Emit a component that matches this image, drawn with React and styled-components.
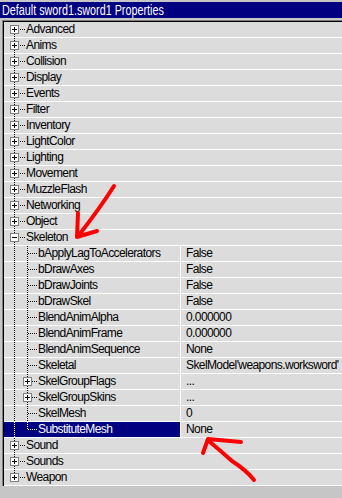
import React from 'react';
import styled, { createGlobalStyle } from 'styled-components';

const GlobalStyle = createGlobalStyle`
  html, body { margin: 0; padding: 0; background: #c6c6c6; }
  body { font-family: "Liberation Sans", Arial, sans-serif; }
`;

const Window = styled.div`
  position: relative;
  width: 342px;
  height: 498px;
  overflow: hidden;
  background: #c6c6c6;
  padding-top: 2px;
  box-sizing: border-box;
  display: flex;
  flex-direction: column;
`;

const TitleBar = styled.div`
  height: 16px;
  background: #000080;
  color: #fff;
  line-height: 16px;
  padding-left: 2px;
  white-space: nowrap;
  margin-bottom: 2px;
  overflow: hidden;
`;

const TitleText = styled.span`
  display: inline-block;
  font-family: "Liberation Sans", Arial, sans-serif;
  font-size: 14px;
  transform: scaleX(0.77);
  transform-origin: left center;
`;

const Sunken = styled.div`
  margin-left: 2px;
  border-top: 1px solid #808080;
  border-left: 1px solid #808080;
`;

const Inner = styled.div`
  border-top: 1px solid #000;
  border-left: 1px solid #000;
`;

const List = styled.div`
  display: flex;
  flex-direction: column;
`;

const Row = styled.div`
  display: flex;
  height: 15px;
  border-bottom: 1px solid #fff;
  background: #dcdcdc;
  font-size: 12px;
  letter-spacing: -0.6px;
  color: #000;
`;

const NameCell = styled.div`
  display: flex;
  align-items: center;
  flex: ${(p) => (p.$full ? '1 1 auto' : '0 0 176px')};
  background: ${(p) => (p.$selected ? '#000080' : 'transparent')};
  color: ${(p) => (p.$selected ? '#fff' : '#000')};
  overflow: hidden;
  white-space: nowrap;
`;

const ValueCell = styled.div`
  flex: 1;
  border-left: 1px solid #fff;
  padding-left: 5px;
  display: flex;
  align-items: center;
  white-space: nowrap;
  overflow: hidden;
`;

const Label = styled.span`
  line-height: 15px;
`;

const GutterSvg = styled.svg`
  flex: none;
  display: block;
`;

const Overlay = styled.svg`
  position: absolute;
  left: 0;
  top: 0;
  pointer-events: none;
`;

function vDots(x, y0, y1, color, key) {
  const out = [];
  for (let y = y0; y <= y1; y++) {
    if (y % 2 === 0) out.push(<rect key={`${key}v${y}`} x={x} y={y} width="1" height="1" fill={color} />);
  }
  return out;
}

function hDots(y, x0, x1, color, key) {
  const out = [];
  for (let x = x0; x <= x1; x++) {
    if (x % 2 === 0) out.push(<rect key={`${key}h${x}`} x={x} y={y} width="1" height="1" fill={color} />);
  }
  return out;
}

function Box({ cx, type }) {
  return (
    <g>
      <rect x={cx - 3.5} y={3.5} width="8" height="8" fill="#fff" stroke="#808080" />
      <rect x={cx - 2} y={7} width="5" height="1" fill="#000" />
      {type === 'plus' && <rect x={cx} y={5} width="1" height="5" fill="#000" />}
    </g>
  );
}

function Gutter({ level, expander, first, last, childLast, selected }) {
  const c = selected ? '#fff' : '#000';
  const w = level === 0 ? 22 : 34;
  const parts = [];
  if (level === 0) {
    parts.push(...vDots(10, first ? 12 : 0, last ? 2 : 14, c, 'r'));
    parts.push(...hDots(7, expander ? 15 : 10, 20, c, 'h'));
  } else {
    parts.push(...vDots(10, 0, 14, c, 'r'));
    parts.push(...vDots(23, 0, childLast ? 7 : 14, c, 'c'));
    parts.push(...hDots(7, expander ? 28 : 24, 32, c, 'h'));
  }
  return (
    <GutterSvg width={w} height="15" viewBox={`0 0 ${w} 15`}>
      {parts}
      {expander && <Box cx={level === 0 ? 10 : 23} type={expander} />}
    </GutterSvg>
  );
}

const rows = [
  { name: 'Advanced', exp: 'plus' },
  { name: 'Anims', exp: 'plus' },
  { name: 'Collision', exp: 'plus' },
  { name: 'Display', exp: 'plus' },
  { name: 'Events', exp: 'plus' },
  { name: 'Filter', exp: 'plus' },
  { name: 'Inventory', exp: 'plus' },
  { name: 'LightColor', exp: 'plus' },
  { name: 'Lighting', exp: 'plus' },
  { name: 'Movement', exp: 'plus' },
  { name: 'MuzzleFlash', exp: 'plus' },
  { name: 'Networking', exp: 'plus' },
  { name: 'Object', exp: 'plus' },
  { name: 'Skeleton', exp: 'minus' },
  { name: 'bApplyLagToAccelerators', value: 'False', level: 1 },
  { name: 'bDrawAxes', value: 'False', level: 1 },
  { name: 'bDrawJoints', value: 'False', level: 1 },
  { name: 'bDrawSkel', value: 'False', level: 1 },
  { name: 'BlendAnimAlpha', value: '0.000000', level: 1 },
  { name: 'BlendAnimFrame', value: '0.000000', level: 1 },
  { name: 'BlendAnimSequence', value: 'None', level: 1 },
  { name: 'Skeletal', value: "SkelModel'weapons.worksword'", level: 1 },
  { name: 'SkelGroupFlags', value: '...', level: 1, exp: 'plus' },
  { name: 'SkelGroupSkins', value: '...', level: 1, exp: 'plus' },
  { name: 'SkelMesh', value: '0', level: 1 },
  { name: 'SubstituteMesh', value: 'None', level: 1, childLast: true, selected: true },
  { name: 'Sound', exp: 'plus' },
  { name: 'Sounds', exp: 'plus' },
  { name: 'Weapon', exp: 'plus' },
];

export default function App() {
  return (
    <>
      <GlobalStyle />
      <Window>
        <TitleBar>
          <TitleText>Default sword1.sword1 Properties</TitleText>
        </TitleBar>
        <Sunken>
          <Inner>
            <List>
              {rows.map((r, i) => {
                const level = r.level || 0;
                const isProp = level === 1;
                return (
                  <Row key={r.name}>
                    <NameCell $full={!isProp} $selected={r.selected}>
                      <Gutter
                        level={level}
                        expander={r.exp}
                        first={i === 0}
                        last={i === rows.length - 1}
                        childLast={r.childLast}
                        selected={r.selected}
                      />
                      <Label>{r.name}</Label>
                    </NameCell>
                    {isProp && (
                      <ValueCell>
                        <Label>{r.value}</Label>
                      </ValueCell>
                    )}
                  </Row>
                );
              })}
            </List>
          </Inner>
        </Sunken>
        <Overlay width="342" height="498" viewBox="0 0 342 498">
          <g fill="none" stroke="#f00" strokeWidth="4" strokeLinecap="round" strokeLinejoin="round">
            <path d="M114 186 Q100 208 79 235" />
            <path d="M78 213 L77 237 L97 231" />
            <path d="M203 453 L208 439 L241 442" />
            <path d="M210 442 Q222 452 232 461 Q246 470 254 480" />
          </g>
        </Overlay>
      </Window>
    </>
  );
}
